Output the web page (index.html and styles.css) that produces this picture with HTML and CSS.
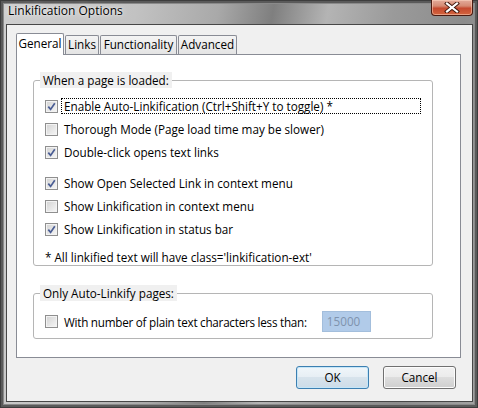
FILE: index.html
```html
<!doctype html>
<html>
    <head>
        <meta charset="UTF-8"/>
        <title>Linkification Options</title>
        <link rel="stylesheet" href="styles.css">
    </head>
    <body>
    <div class="window">
        <div class="titlebar">
            <span class="title">Linkification Options</span>
            <div class="close">
                <svg width="16" height="11" viewBox="0 0 16 11">
                    <path d="M3 1.5 L13 9.5 M13 1.5 L3 9.5" stroke="#3a1208" stroke-width="4" stroke-linecap="square"/>
                    <path d="M3 1.5 L13 9.5 M13 1.5 L3 9.5" stroke="#fff" stroke-width="2.2" stroke-linecap="square"/>
                </svg>
            </div>
        </div>
        <div class="client">
            <div class="tabs">
                <div class="tab active tab-general">General</div>
                <div class="tab tab-links">Links</div>
                <div class="tab tab-func">Functionality</div>
                <div class="tab tab-adv">Advanced</div>
            </div>
            <div class="panel">
                <fieldset class="group group-load">
                    <legend>When a page is loaded:</legend>
                    <div class="row">
                        <span class="box on"></span>
                        <span class="text focus">Enable Auto-Linkification (Ctrl+Shift+Y to toggle) *</span>
                    </div>
                    <div class="row">
                        <span class="box"></span>
                        <span class="text">Thorough Mode (Page load time may be slower)</span>
                    </div>
                    <div class="row">
                        <span class="box on"></span>
                        <span class="text">Double-click opens text links</span>
                    </div>
                    <div class="row row-gap">
                        <span class="box on"></span>
                        <span class="text">Show Open Selected Link in context menu</span>
                    </div>
                    <div class="row">
                        <span class="box"></span>
                        <span class="text">Show Linkification in context menu</span>
                    </div>
                    <div class="row">
                        <span class="box on"></span>
                        <span class="text">Show Linkification in status bar</span>
                    </div>
                    <p class="note">* All linkified text will have class='linkification-ext'</p>
                </fieldset>
                <fieldset class="group group-only">
                    <legend>Only Auto-Linkify pages:</legend>
                    <div class="row">
                        <span class="box"></span>
                        <span class="text tight">With number of plain text characters less than:</span>
                        <span class="num">15000</span>
                    </div>
                </fieldset>
            </div>
            <div class="buttons">
                <div class="btn btn-default">OK</div>
                <div class="btn">Cancel</div>
            </div>
        </div>
    </div>
    </body>
</html>
```

FILE: styles.css
```css
* {
    margin: 0px;
    padding: 0px;
    box-sizing: border-box;
}
body {
    font-family: "Open Sans", "Noto Sans", sans-serif;
    font-size: 11.7px;
    color: #000;
    background: #777;
}
.window {
    width: 478px;
    height: 408px;
    padding: 0 5px 6px 6px;
    display: flex;
    flex-direction: column;
    background: linear-gradient(100deg, #cfcfcf 0%, #c2c2c2 25%, #a9a9a9 40%, #7f7f7f 50%, #b4b4b4 60%, #9a9a9a 72%, #8c8c8c 85%, #a3a3a3 100%);
    box-shadow: inset 0 0 0 1px #3d3d3d, inset 0 0 0 3px #5a5a5a, inset 0 0 0 4px #8a8a8a;
}
/*标题栏*/
.titlebar {
    height: 24px;
    display: flex;
    align-items: flex-start;
    flex: none;
}
.title {
    padding: 3px 0 0 2px;
    line-height: 16px;
    font-size: 12px;
    text-shadow: 0 0 6px rgba(255,255,255,.9), 0 0 2px rgba(255,255,255,.8);
}
.close {
    margin-left: auto;
    width: 42px;
    height: 16px;
    border: 1px solid #4a1a10;
    border-top: none;
    border-radius: 0 0 4px 4px;
    background: linear-gradient(#e3ab9b 0%, #d58a73 40%, #c54a2f 55%, #d3643e 100%);
    box-shadow: inset 0 0 0 1px rgba(255,220,200,.5);
    display: flex;
    align-items: center;
    justify-content: center;
}
.close svg {
    display: block;
}
.client {
    flex: 1;
    background: #f0f0f0;
    border: 1px solid #474747;
    padding: 8px 0 0 9px;
    display: flex;
    flex-direction: column;
}
/*选项卡*/
.tabs {
    display: flex;
    align-items: flex-end;
    height: 21px;
}
.tab {
    height: 19px;
    line-height: 17px;
    text-align: center;
    border: 1px solid #898c95;
    border-bottom: none;
    margin-right: 1px;
    background: linear-gradient(#f4f4f4, #e4e4e4);
    border-radius: 2px 2px 0 0;
    white-space: nowrap;
}
.tab.active {
    height: 22px;
    margin-bottom: -1px;
    background: #fff;
    line-height: 19px;
    position: relative;
    z-index: 1;
}
.tab-general {
    width: 48px;
}
.tab-links {
    width: 34px;
}
.tab-func {
    width: 77px;
}
.tab-adv {
    width: 59px;
}
.panel {
    width: 445px;
    height: 304px;
    background: #fff;
    border: 1px solid #898c95;
    padding: 17px 0 0 16px;
}
/*分组框*/
.group {
    width: 400px;
    border: 1px solid #b5b5b5;
    border-radius: 3px;
    padding: 10px 11px 0 11px;
}
.group legend {
    margin-left: -5px;
    padding: 0 3px;
    line-height: 16px;
    background: #f0f0f0;
}
.group-only {
    margin-top: 19px;
    padding: 10px 11px 6px 11px;
}
.row {
    display: flex;
    align-items: center;
    height: 16px;
    margin-bottom: 7px;
}
.row-gap {
    margin-top: 15px;
}
.group-only .row {
    height: 21px;
    margin-bottom: 0;
}
.box {
    width: 13px;
    height: 13px;
    flex: none;
    border: 1px solid #8f8f8f;
    background: linear-gradient(135deg, #d2d2d2, #f7f7f7);
    box-shadow: inset 0 0 0 1px #f3f3f3;
    margin-right: 3px;
}
.box.on {
    background: url("data:image/svg+xml;utf8,<svg xmlns='http://www.w3.org/2000/svg' width='11' height='11'><path d='M2.3 5.6 L4.6 8.4 L8.8 2.2' fill='none' stroke='%234a5d94' stroke-width='1.7'/></svg>") center no-repeat, linear-gradient(135deg, #d2d2d2, #f7f7f7);
}
.text {
    border: 1px dotted transparent;
    padding: 0 2px;
    line-height: 14px;
    white-space: nowrap;
}
.text.focus {
    flex: 1;
    border-color: #000;
}
.text.tight {
    letter-spacing: -0.25px;
}
.note {
    margin-top: 12px;
    line-height: 16px;
}
.num {
    margin-left: 12px;
    width: 49px;
    height: 21px;
    line-height: 19px;
    padding: 0 4px;
    background: #b1cbe9;
    border: 1px solid #a3bedc;
    color: #7f93ad;
}
/*按钮*/
.buttons {
    display: flex;
    justify-content: flex-end;
    gap: 14px;
    padding-right: 16px;
    margin-top: 8px;
}
.btn {
    width: 73px;
    height: 23px;
    line-height: 21px;
    text-align: center;
    border: 1px solid #707070;
    border-radius: 3px;
    background: linear-gradient(#f2f2f2 0%, #ebebeb 50%, #dddddd 50%, #cfcfcf 100%);
    box-shadow: inset 0 0 0 1px #fcfcfc;
}
.btn-default {
    border-color: #3c7fb1;
    background: linear-gradient(#f0f6fa 0%, #e6eef4 50%, #d7e3ec 50%, #cddce8 100%);
    box-shadow: inset 0 0 0 1px #c5e6f8;
}
```
